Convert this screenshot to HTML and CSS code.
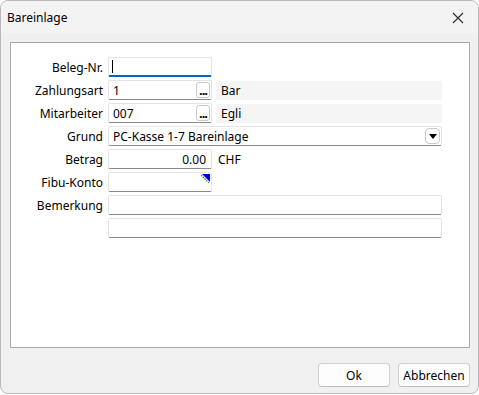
FILE: index.html
```html
<!DOCTYPE html>
<html lang="de">
<head>
    <meta charset="UTF-8">
    <title>Bareinlage</title>
    <link rel="stylesheet" href="styles.css">
</head>
<body>
    <div class="window">
        <div class="titlebar">
            <span class="title">Bareinlage</span>
            <span class="close">
                <svg width="12" height="12" viewBox="0 0 12 12">
                    <path d="M1 1 L11 11 M11 1 L1 11" stroke="#2b2b2b" stroke-width="1.1" fill="none"/>
                </svg>
            </span>
        </div>

        <div class="body">
            <div class="panel">
                <div class="row">
                    <label>Beleg-Nr.</label>
                    <div class="field short focused"><span class="caret"></span></div>
                </div>
                <div class="row">
                    <label>Zahlungsart</label>
                    <div class="field short">1<span class="dots">...</span></div>
                    <div class="info">Bar</div>
                </div>
                <div class="row">
                    <label>Mitarbeiter</label>
                    <div class="field short">007<span class="dots">...</span></div>
                    <div class="info">Egli</div>
                </div>
                <div class="row">
                    <label>Grund</label>
                    <div class="field long select">PC-Kasse 1-7 Bareinlage
                        <span class="drop">
                            <svg width="8" height="5" viewBox="0 0 8 5"><path d="M0 0 L8 0 L4 5 Z" fill="#000"/></svg>
                        </span>
                    </div>
                </div>
                <div class="row">
                    <label>Betrag</label>
                    <div class="field short amount">0.00</div>
                    <span class="unit">CHF</span>
                </div>
                <div class="row">
                    <label>Fibu-Konto</label>
                    <div class="field short">
                        <svg class="corner" width="9" height="9" viewBox="0 0 9 9">
                            <path d="M1 0 L9 0 L9 8 Z" fill="#0000e0"/>
                            <path d="M0 1 L8 9" stroke="#1a8a1a" stroke-width="1.2" stroke-dasharray="1.5 1"/>
                        </svg>
                    </div>
                </div>
                <div class="row">
                    <label>Bemerkung</label>
                    <div class="field long"></div>
                </div>
                <div class="row">
                    <label></label>
                    <div class="field long"></div>
                </div>
            </div>

            <div class="buttons">
                <button class="btn">Ok</button>
                <button class="btn">Abbrechen</button>
            </div>
        </div>
    </div>
</body>
</html>
```

FILE: styles.css
```css
body {
    margin: 0;
    background-color: #ffffff;
    font-family: 'Noto Sans', 'Liberation Sans', sans-serif;
    font-size: 12px;
    color: #000;
}
.window {
    width: 479px;
    height: 394px;
    box-sizing: border-box;
    border: 1px solid #b9b9b9;
    border-radius: 8px;
    background-color: #f0f0f0;
    overflow: hidden;
    display: flex;
    flex-direction: column;
}
.titlebar {
    height: 32px;
    background-color: #f3f3f3;
    display: flex;
    align-items: center;
    justify-content: space-between;
    padding: 0 14px 0 6px;
}
.title {
    font-size: 12px;
}
.close {
    display: flex;
    margin-top: 2px;
}
.body {
    flex: 1;
    padding: 9px 8px 0 9px;
}
.panel {
    height: 306px;
    box-sizing: border-box;
    background-color: #fff;
    border: 1px solid #a9a9a9;
    padding-top: 14px;
    display: flex;
    flex-direction: column;
    gap: 3px;
}
.row {
    display: flex;
    align-items: center;
    height: 20px;
}
.row label {
    width: 92px;
    margin-right: 5px;
    text-align: right;
    flex-shrink: 0;
}
.field {
    height: 20px;
    box-sizing: border-box;
    border: 1px solid #e3e3e3;
    border-bottom-color: #8a8a8a;
    border-radius: 2px;
    background-color: #fff;
    padding: 0 4px;
    display: flex;
    align-items: center;
    position: relative;
}
.short {
    width: 104px;
}
.long {
    width: 334px;
}
.focused {
    border-bottom: 2px solid #0067c0;
}
.caret {
    width: 1px;
    height: 13px;
    background-color: #000;
    margin-left: -1px;
}
.dots {
    position: absolute;
    right: 1px;
    top: 1px;
    width: 14px;
    height: 16px;
    box-sizing: border-box;
    border: 1px solid #c8c8c8;
    border-radius: 3px;
    font-size: 13px;
    font-weight: bold;
    line-height: 14px;
    text-align: center;
    letter-spacing: -1px;
    overflow: hidden;
}
.info {
    width: 226px;
    height: 19px;
    margin-left: 4px;
    background-color: #f5f5f5;
    padding-left: 5px;
    box-sizing: border-box;
    display: flex;
    align-items: center;
}
.drop {
    position: absolute;
    right: 1px;
    top: 1px;
    width: 15px;
    height: 16px;
    box-sizing: border-box;
    border: 1px solid #c8c8c8;
    border-radius: 4px;
    display: flex;
    align-items: center;
    justify-content: center;
}
.amount {
    justify-content: flex-end;
    padding-right: 5px;
}
.unit {
    margin-left: 6px;
}
.corner {
    position: absolute;
    right: 1px;
    top: 1px;
}
.buttons {
    display: flex;
    justify-content: flex-end;
    gap: 8px;
    margin-top: 15px;
    padding-right: 0;
}
.btn {
    width: 72px;
    height: 24px;
    border: 1px solid #d0d0d0;
    border-bottom-color: #bcbcbc;
    border-radius: 4px;
    background-color: #fdfdfd;
    font-family: 'Noto Sans', 'Liberation Sans', sans-serif;
    font-size: 12px;
    color: #000;
    padding: 0;
}
```
